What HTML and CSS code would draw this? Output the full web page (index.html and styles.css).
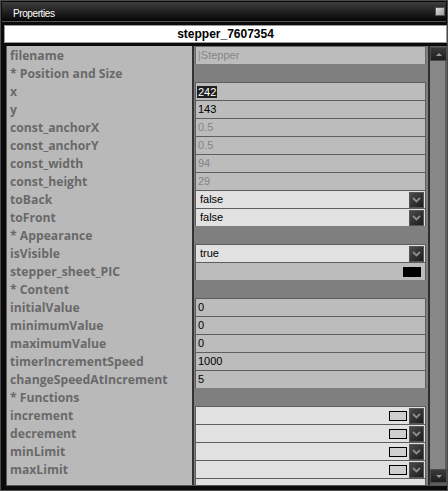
FILE: index.html
```html
<!DOCTYPE html>
<html lang="en">
<head>
    <meta charset="UTF-8">
    <title>Properties</title>
    <link rel="stylesheet" href="styles.css">
</head>
<body>
    <div class="window">
        <div class="titlebar">
            <span class="title">Properties</span>
            <span class="winbtn"></span>
        </div>
        <div class="objname">stepper_7607354</div>

        <div class="panel">
            <div class="rows">
                <div class="row"><div class="label">filename</div><div class="value"><div class="cell input">|Stepper</div></div></div>
                <div class="row"><div class="label">* Position and Size</div><div class="value"></div></div>
                <div class="row"><div class="label">x</div><div class="value"><div class="cell"><span class="sel">242</span></div></div></div>
                <div class="row"><div class="label">y</div><div class="value"><div class="cell">143</div></div></div>
                <div class="row"><div class="label">const_anchorX</div><div class="value"><div class="cell off">0.5</div></div></div>
                <div class="row"><div class="label">const_anchorY</div><div class="value"><div class="cell off">0.5</div></div></div>
                <div class="row"><div class="label">const_width</div><div class="value"><div class="cell off">94</div></div></div>
                <div class="row"><div class="label">const_height</div><div class="value"><div class="cell off">29</div></div></div>
                <div class="row"><div class="label">toBack</div><div class="value"><div class="cell drop"><span class="choice">false</span><span class="arrow"><svg width="9" height="6" viewBox="0 0 9 6"><polyline points="1,1 4.5,4.5 8,1" fill="none" stroke="#8c8c8c" stroke-width="1.8"/></svg></span></div></div></div>
                <div class="row"><div class="label">toFront</div><div class="value"><div class="cell drop"><span class="choice">false</span><span class="arrow"><svg width="9" height="6" viewBox="0 0 9 6"><polyline points="1,1 4.5,4.5 8,1" fill="none" stroke="#8c8c8c" stroke-width="1.8"/></svg></span></div></div></div>
                <div class="row"><div class="label">* Appearance</div><div class="value"></div></div>
                <div class="row"><div class="label">isVisible</div><div class="value"><div class="cell drop"><span class="choice">true</span><span class="arrow"><svg width="9" height="6" viewBox="0 0 9 6"><polyline points="1,1 4.5,4.5 8,1" fill="none" stroke="#8c8c8c" stroke-width="1.8"/></svg></span></div></div></div>
                <div class="row"><div class="label">stepper_sheet_PIC</div><div class="value"><div class="cell pic"><span class="swatch"></span></div></div></div>
                <div class="row"><div class="label">* Content</div><div class="value"></div></div>
                <div class="row"><div class="label">initialValue</div><div class="value"><div class="cell">0</div></div></div>
                <div class="row"><div class="label">minimumValue</div><div class="value"><div class="cell">0</div></div></div>
                <div class="row"><div class="label">maximumValue</div><div class="value"><div class="cell">0</div></div></div>
                <div class="row"><div class="label">timerIncrementSpeed</div><div class="value"><div class="cell">1000</div></div></div>
                <div class="row"><div class="label">changeSpeedAtIncrement</div><div class="value"><div class="cell">5</div></div></div>
                <div class="row"><div class="label">* Functions</div><div class="value"></div></div>
                <div class="row"><div class="label">increment</div><div class="value"><div class="cell drop"><span class="fnbox"></span><span class="arrow"><svg width="9" height="6" viewBox="0 0 9 6"><polyline points="1,1 4.5,4.5 8,1" fill="none" stroke="#8c8c8c" stroke-width="1.8"/></svg></span></div></div></div>
                <div class="row"><div class="label">decrement</div><div class="value"><div class="cell drop"><span class="fnbox"></span><span class="arrow"><svg width="9" height="6" viewBox="0 0 9 6"><polyline points="1,1 4.5,4.5 8,1" fill="none" stroke="#8c8c8c" stroke-width="1.8"/></svg></span></div></div></div>
                <div class="row"><div class="label">minLimit</div><div class="value"><div class="cell drop"><span class="fnbox"></span><span class="arrow"><svg width="9" height="6" viewBox="0 0 9 6"><polyline points="1,1 4.5,4.5 8,1" fill="none" stroke="#8c8c8c" stroke-width="1.8"/></svg></span></div></div></div>
                <div class="row"><div class="label">maxLimit</div><div class="value"><div class="cell drop"><span class="fnbox"></span><span class="arrow"><svg width="9" height="6" viewBox="0 0 9 6"><polyline points="1,1 4.5,4.5 8,1" fill="none" stroke="#8c8c8c" stroke-width="1.8"/></svg></span></div></div></div>
                <div class="row"><div class="label"></div><div class="value"><div class="cell drop"></div></div></div>
            </div>

            <div class="scrollbar">
                <div class="sb-btn"><span class="tri-up"></span></div>
                <div class="sb-track"><div class="sb-thumb"></div></div>
                <div class="sb-btn"><span class="tri-down"></span></div>
            </div>
        </div>
    </div>
</body>
</html>
```

FILE: styles.css
```css
body {
    margin: 0;
    background: #000;
    font-family: "Liberation Sans", Arial, sans-serif;
}
.window {
    width: 448px;
    height: 491px;
    box-sizing: border-box;
    border: 1px solid #4b4b4b;
    padding: 1px;
    background: #0b0b0b;
    display: flex;
    flex-direction: column;
    overflow: hidden;
}
.titlebar {
    height: 20px;
    flex: none;
    box-sizing: border-box;
    padding: 3px 1px 0 11px;
    background: linear-gradient(#3e3e3e, #060606);
    border-bottom: 1px solid #555;
    display: flex;
    align-items: center;
    justify-content: space-between;
}
.title {
    color: #fff;
    font-size: 10px;
    letter-spacing: -0.4px;
}
.winbtn {
    width: 10px;
    height: 9px;
    margin-top: -3px;
    box-sizing: border-box;
    border: 1px solid #555;
    background: linear-gradient(135deg, #e0e0e0, #9a9a9a);
}
.objname {
    height: 18px;
    flex: none;
    box-sizing: border-box;
    margin: 3px -1px 3px 2px;
    border: 1px solid #9a9a9a;
    background: #fff;
    color: #000;
    font-size: 12px;
    font-weight: bold;
    line-height: 16px;
    text-align: center;
}
.panel {
    height: 439px;
    flex: none;
    margin: 0 -1px 0 4px;
    display: flex;
    overflow: hidden;
    border-bottom: 1px solid #555;
}
.rows {
    flex: 1;
    overflow: hidden;
}
.row {
    height: 18px;
    display: flex;
}
.label {
    width: 188px;
    flex: none;
    box-sizing: border-box;
    border-left: 1px solid #5a5a5a;
    border-right: 2px solid #333;
    background: #b9b9b9;
    color: #696969;
    font-family: "Open Sans", sans-serif;
    font-weight: 700;
    font-size: 12.2px;
    line-height: 18px;
    padding: 1px 0 0 3px;
    white-space: nowrap;
    overflow: hidden;
}
.value {
    flex: 1;
    background: #7f7f7f;
    padding: 0 2px 0 1px;
}
.cell {
    height: 19px;
    box-sizing: border-box;
    border: 1px solid #5e5e5e;
    background: #bcbcbc;
    color: #000;
    font-size: 11px;
    line-height: 17px;
    padding-left: 2px;
    display: flex;
    align-items: center;
}
.cell.off,
.cell.input {
    color: #858585;
}
.cell.input {
    border-color: #6a6a6a;
}
.sel {
    background: #1e1e1e;
    color: #fff;
    line-height: 12px;
    padding: 0 1px;
    margin-left: -1px;
}
.cell.drop {
    background: #e1e1e1;
    padding: 0 1px 0 4px;
}
.choice {
    flex: 1;
}
.arrow {
    width: 15px;
    height: 16px;
    flex: none;
    box-sizing: border-box;
    border: 1px solid #555;
    background: linear-gradient(135deg, #4a4a4a, #1c1c1c);
    display: flex;
    align-items: center;
    justify-content: center;
}
.fnbox {
    width: 18px;
    height: 10px;
    box-sizing: border-box;
    border: 1px solid #000;
    background: #cfcfcf;
    margin: 0 2px 0 auto;
}
.cell.pic {
    justify-content: flex-end;
    padding-right: 4px;
}
.swatch {
    width: 18px;
    height: 10px;
    background: #000;
}
.scrollbar {
    width: 17px;
    flex: none;
    border-left: 2px solid #2e2e2e;
    background: #5e5e5e;
    display: flex;
    flex-direction: column;
}
.sb-btn {
    height: 14px;
    flex: none;
    box-sizing: border-box;
    border: 1px solid #4c4c4c;
    background: linear-gradient(#3a3a3a, #1e1e1e);
    display: flex;
    align-items: center;
    justify-content: center;
}
.sb-btn:first-child {
    margin-top: 1px;
}
.sb-btn:last-child {
    margin-bottom: 2px;
}
.tri-up,
.tri-down {
    width: 0;
    height: 0;
    border-left: 3px solid transparent;
    border-right: 3px solid transparent;
}
.tri-up {
    border-bottom: 3px solid #9a9a9a;
}
.tri-down {
    border-top: 3px solid #9a9a9a;
}
.sb-track {
    flex: 1;
    display: flex;
}
.sb-thumb {
    flex: 1;
    margin-right: 2px;
    background: #878787;
}
```
